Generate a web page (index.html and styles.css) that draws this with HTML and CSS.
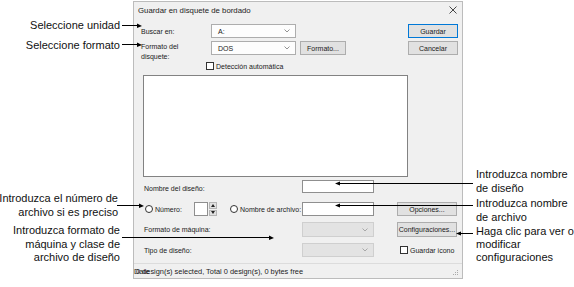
FILE: index.html
```html
<!DOCTYPE html>
<html lang="es">
<head>
    <meta charset="UTF-8">
    <title>Guardar en disquete de bordado</title>
    <link rel="stylesheet" href="styles.css">
</head>
<body>
    <div class="page">
        <div class="dialog">
            <div class="titlebar">
                <span>Guardar en disquete de bordado</span>
                <svg class="close" width="8" height="8" viewBox="0 0 8 8"><path d="M0.5 0.5 L7.5 7.5 M7.5 0.5 L0.5 7.5" stroke="#333" stroke-width="0.9" fill="none"/></svg>
            </div>

            <div class="row row-1">
                <span class="lbl lbl-top">Buscar en:</span>
                <div class="combo w85"><span>A:</span><svg class="chev" width="6" height="4" viewBox="0 0 6 4"><path d="M0.5 0.5 L3 3 L5.5 0.5" stroke="#777" fill="none" stroke-width="0.8"/></svg></div>
                <div class="btn btn-default ml112 w50">Guardar</div>
            </div>

            <div class="row row-2">
                <span class="lbl lbl-top lbl-2">Formato del<br>disquete:</span>
                <div class="combo w85"><span>DOS</span><svg class="chev" width="6" height="4" viewBox="0 0 6 4"><path d="M0.5 0.5 L3 3 L5.5 0.5" stroke="#777" fill="none" stroke-width="0.8"/></svg></div>
                <div class="btn ml4 w46">Formato...</div>
                <div class="btn ml62 w50">Cancelar</div>
            </div>

            <div class="row row-check">
                <span class="check"></span>
                <span class="opt">Detección automática</span>
            </div>

            <div class="filelist"></div>

            <div class="row row-name">
                <span class="lbl lbl-form lbl-low">Nombre del diseño:</span>
                <div class="field w72"></div>
            </div>

            <div class="row row-num">
                <span class="radio-group g-num"><span class="radio"></span><span class="opt">Número:</span></span>
                <div class="field w14"></div>
                <div class="spin">
                    <span class="spin-btn"><svg width="4" height="3" viewBox="0 0 4 3"><path d="M0 3 L2 0 L4 3 Z" fill="#222"/></svg></span>
                    <span class="spin-btn"><svg width="4" height="3" viewBox="0 0 4 3"><path d="M0 0 L2 3 L4 0 Z" fill="#222"/></svg></span>
                </div>
                <span class="radio-group g-file"><span class="radio"></span><span class="opt">Nombre de archivo:</span></span>
                <div class="field w72"></div>
                <div class="btn ml23 w60">Opciones...</div>
            </div>

            <div class="row row-mach">
                <span class="lbl lbl-form">Formato de máquina:</span>
                <div class="combo combo-off w72"><span></span><svg class="chev" width="6" height="4" viewBox="0 0 6 4"><path d="M0.5 0.5 L3 3 L5.5 0.5" stroke="#999" fill="none" stroke-width="0.8"/></svg></div>
                <div class="btn ml23 w60">Configuraciones...</div>
            </div>

            <div class="row row-type">
                <span class="lbl lbl-form">Tipo de diseño:</span>
                <div class="combo combo-off w72"><span></span><svg class="chev" width="6" height="4" viewBox="0 0 6 4"><path d="M0.5 0.5 L3 3 L5.5 0.5" stroke="#999" fill="none" stroke-width="0.8"/></svg></div>
                <span class="check ml26"></span>
                <span class="opt">Guardar icono</span>
            </div>

            <div class="statusbar">
                <span class="status-over">Date</span>
                <span class="status-text">0 design(s) selected, Total 0 design(s), 0 bytes free</span>
                <svg class="grip" width="6" height="6" viewBox="0 0 6 6">
                    <rect x="4" y="0" width="1" height="1" fill="#aaa"/>
                    <rect x="2" y="2" width="1" height="1" fill="#aaa"/>
                    <rect x="4" y="2" width="1" height="1" fill="#aaa"/>
                    <rect x="0" y="4" width="1" height="1" fill="#aaa"/>
                    <rect x="2" y="4" width="1" height="1" fill="#aaa"/>
                    <rect x="4" y="4" width="1" height="1" fill="#aaa"/>
                </svg>
            </div>
        </div>

        <!-- callout texts -->
        <div class="note note-left n-unidad">Seleccione unidad</div>
        <div class="note note-left n-formato">Seleccione formato</div>
        <div class="note note-left n-numero">Introduzca el número de<br>archivo si es preciso</div>
        <div class="note note-left n-maquina">Introduzca formato de<br>máquina y clase de<br>archivo de diseño</div>

        <div class="note note-right n-diseno">Introduzca nombre<br>de diseño</div>
        <div class="note note-right n-archivo">Introduzca nombre<br>de archivo</div>
        <div class="note note-right n-config">Haga clic para ver o<br>modificar<br>configuraciones</div>

        <!-- callout lines -->
        <svg class="leaders" width="574" height="287" viewBox="0 0 574 287">
            <g stroke="#000" stroke-width="1" fill="none">
                <line x1="122" y1="25.5" x2="138" y2="25.5"/>
                <line x1="122" y1="44.5" x2="138" y2="44.5"/>
                <line x1="117" y1="205.5" x2="140" y2="205.5"/>
                <line x1="122" y1="237.5" x2="270" y2="237.5"/>
                <line x1="339" y1="183.5" x2="473" y2="183.5"/>
                <line x1="339" y1="205.5" x2="473" y2="205.5"/>
                <line x1="460" y1="233.5" x2="473" y2="233.5"/>
            </g>
            <g fill="#000">
                <path d="M142 26 L137 23.5 L137 28 Z"/>
                <path d="M142 45 L137 42.5 L137 47 Z"/>
                <path d="M144 206 L139 203.5 L139 208 Z"/>
                <path d="M274 238 L269 235.5 L269 240 Z"/>
                <path d="M335 183.5 L340 181.5 L340 185.5 Z"/>
                <path d="M335 205.5 L340 203.5 L340 207.5 Z"/>
                <path d="M456 233.5 L461 231.5 L461 235.5 Z"/>
            </g>
        </svg>
    </div>
</body>
</html>
```

FILE: styles.css
```css
body {
    margin: 0;
    background: #fff;
    font-family: "Liberation Sans", Arial, sans-serif;
}
.page {
    position: relative;
    width: 574px;
    height: 287px;
    overflow: hidden;
}

/* dialog window */
.dialog {
    position: absolute;
    left: 133px;
    top: 1px;
    width: 330px;
    height: 278px;
    box-sizing: border-box;
    border: 1px solid #bcbcbc;
    background: #f0f0f0;
    display: flex;
    flex-direction: column;
    font-size: 7px;
    color: #1a1a1a;
}
.titlebar {
    height: 16px;
    padding: 0 5px 0 4px;
    display: flex;
    align-items: center;
    justify-content: space-between;
    font-size: 7.8px;
    color: #222;
}
.row {
    display: flex;
    align-items: center;
    flex-shrink: 0;
}
.row-1 { margin-top: 6px; height: 14px; }
.row-2 { margin-top: 3px; height: 14px; }
.row-check { margin-top: 7px; height: 8px; margin-left: 72px; }
.row-name { margin-top: 3px; height: 13px; }
.row-num { margin-top: 9px; height: 14px; }
.row-mach { margin-top: 6px; height: 15px; }
.row-type { margin-top: 6px; height: 14px; }

.lbl { flex-shrink: 0; white-space: nowrap; }
.lbl-top { width: 70px; margin-left: 7px; }
.lbl-2 {
    align-self: flex-start;
    line-height: 10px;
    height: 14px;
    margin-top: 1px;
}
.lbl-form { width: 158px; margin-left: 10px; }
.lbl-low { padding-top: 4px; }

.w14 { width: 14px; }
.w46 { width: 46px; }
.w50 { width: 50px; }
.w60 { width: 60px; }
.w72 { width: 72px; }
.w85 { width: 85px; }
.ml4 { margin-left: 4px; }
.ml23 { margin-left: 23px; }
.ml26 { margin-left: 26px; }
.ml62 { margin-left: 62px; }
.ml112 { margin-left: 112px; }

.combo {
    height: 100%;
    box-sizing: border-box;
    border: 1px solid #adadad;
    background: #fdfdfd;
    display: flex;
    align-items: center;
    justify-content: space-between;
    padding: 0 5px 0 6px;
    flex-shrink: 0;
}
.combo-off {
    background: #e3e3e3;
    border-color: #cfcfcf;
}
.btn {
    height: 100%;
    box-sizing: border-box;
    border: 1px solid #adadad;
    background: #e1e1e1;
    display: flex;
    align-items: center;
    justify-content: center;
    flex-shrink: 0;
    white-space: nowrap;
}
.btn-default {
    border-color: #0078d7;
}
.field {
    height: 100%;
    box-sizing: border-box;
    border: 1px solid #8f8f8f;
    background: #fff;
    flex-shrink: 0;
}

.check {
    width: 8px;
    height: 8px;
    box-sizing: border-box;
    border: 1px solid #333;
    background: #fff;
    flex-shrink: 0;
}
.opt {
    margin-left: 2px;
    white-space: nowrap;
}
.radio-group {
    display: flex;
    align-items: center;
    flex-shrink: 0;
}
.g-num { width: 49px; margin-left: 11px; }
.g-file { width: 72px; margin-left: 13px; }
.radio {
    width: 8px;
    height: 8px;
    box-sizing: border-box;
    border: 1px solid #333;
    border-radius: 50%;
    background: #fff;
    flex-shrink: 0;
}

.spin {
    width: 8px;
    height: 14px;
    margin-left: 1px;
    display: flex;
    flex-direction: column;
    gap: 1px;
    flex-shrink: 0;
}
.spin-btn {
    flex: 1;
    background: #e1e1e1;
    border: 1px solid #b5b5b5;
    box-sizing: border-box;
    display: flex;
    align-items: center;
    justify-content: center;
}

.filelist {
    margin: 5px 0 0 9px;
    width: 265px;
    height: 102px;
    box-sizing: border-box;
    border: 1px solid #828282;
    background: #fff;
    flex-shrink: 0;
}

.statusbar {
    position: relative;
    margin-top: auto;
    height: 14px;
    border-top: 1px solid #dcdcdc;
    display: flex;
    align-items: center;
    padding: 0 3px 0 1px;
    font-size: 7.4px;
    color: #222;
}
.status-text { margin-left: 1px; }
.status-over {
    position: absolute;
    left: 0;
    top: 3px;
}
.grip {
    margin-left: auto;
    align-self: flex-end;
    margin-bottom: 2px;
}

/* callouts */
.note {
    position: absolute;
    font-size: 11px;
    line-height: 14px;
    color: #111;
    white-space: nowrap;
}
.note-left { right: 454px; text-align: right; }
.note-right { left: 476px; }
.n-unidad { top: 18px; }
.n-formato { top: 38px; }
.n-numero { top: 191px; right: 456px; }
.n-maquina { top: 224px; line-height: 13.5px; }
.n-diseno { top: 167px; }
.n-archivo { top: 196px; }
.n-config { top: 225px; line-height: 13px; }

.leaders {
    position: absolute;
    left: 0;
    top: 0;
}
```
